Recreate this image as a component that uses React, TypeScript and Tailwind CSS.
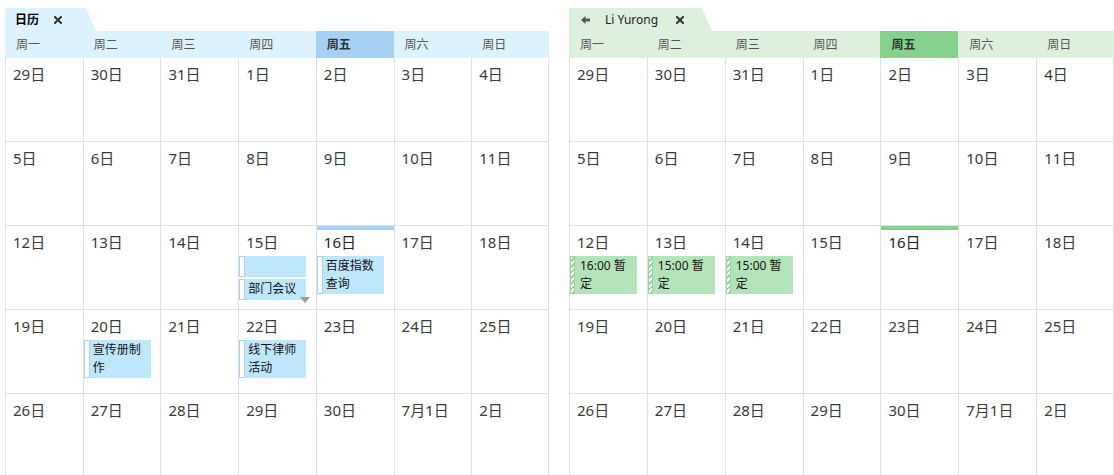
import React from 'react'

type Ev = { text: string; h?: number }
type Theme = 'blue' | 'green'

const WEEK = ['周一', '周二', '周三', '周四', '周五', '周六', '周日']
const DAYS = [
  ['29日', '30日', '31日', '1日', '2日', '3日', '4日'],
  ['5日', '6日', '7日', '8日', '9日', '10日', '11日'],
  ['12日', '13日', '14日', '15日', '16日', '17日', '18日'],
  ['19日', '20日', '21日', '22日', '23日', '24日', '25日'],
  ['26日', '27日', '28日', '29日', '30日', '7月1日', '2日'],
]

const CloseIcon = () => (
  <svg width="8" height="8" viewBox="0 0 8 8" className="shrink-0">
    <path d="M1 1L7 7M7 1L1 7" stroke="#333" strokeWidth="2" strokeLinecap="square" />
  </svg>
)

const BackIcon = () => (
  <svg width="9" height="8" viewBox="0 0 9 8" className="shrink-0">
    <path d="M0 4L4.5 0V2.5H9V5.5H4.5V8Z" fill="#555" />
  </svg>
)

function BlueEvent({ text, h }: Ev) {
  return (
    <div className="flex w-[67px] bg-[#bee7fc]" style={h ? { height: h } : undefined}>
      <div className="w-[6px] shrink-0 bg-white border border-[#a6d4f2]" />
      <div className="pl-[3px] pr-[4px] text-[12px] leading-[18px] py-[1px] text-[#111]">{text}</div>
    </div>
  )
}

function GreenEvent({ text }: Ev) {
  return (
    <div className="flex w-[67px] bg-[#b3e4b9]">
      <div className="w-[5px] shrink-0 border border-[#9bd5a2] bg-[repeating-linear-gradient(135deg,#ffffff_0px,#ffffff_2px,#9bd5a2_2px,#9bd5a2_4px)]" />
      <div className="pl-[5px] pr-[5px] text-[12px] leading-[18px] py-[1px] text-[#111]">{text}</div>
    </div>
  )
}

function Panel({
  theme,
  tab,
  tabW,
  w,
  events,
}: {
  theme: Theme
  tab: React.ReactNode
  tabW: string
  w: string
  events: Record<string, React.ReactNode>
}) {
  const blue = theme === 'blue'
  return (
    <div className={`${w} shrink-0 flex flex-col pt-[8px]`}>
      <div
        className={`${tabW} h-[23px] shrink-0 flex items-center ${
          blue ? 'bg-[#dcf2fd]' : 'bg-[#dcf0dd]'
        } [clip-path:polygon(0_0,calc(100%-10px)_0,100%_100%,0_100%)]`}
      >
        {tab}
      </div>
      <div className={`grid grid-cols-7 h-[27px] shrink-0 ${blue ? 'bg-[#dcf2fd]' : 'bg-[#dcf0dd]'}`}>
        {WEEK.map((d, i) => (
          <div
            key={d}
            className={`flex items-center pl-[11px] text-[12px] ${
              i === 4
                ? `font-bold text-[#333] ${blue ? 'bg-[#a7d1f3]' : 'bg-[#87d18e]'}`
                : 'text-[#555]'
            }`}
          >
            {d}
          </div>
        ))}
      </div>
      <div className="grid grid-cols-7 shrink-0">
        {DAYS.map((row, r) =>
          row.map((d, c) => {
            const key = `${r}-${c}`
            const today = r === 2 && c === 4
            return (
              <div
                key={key}
                className={`relative h-[84px] border-l border-b border-[#e0e0e0] ${c === 6 ? 'border-r' : ''}`}
              >
                {today && (
                  <div
                    className={`absolute top-0 left-0 right-0 h-[4px] ${blue ? 'bg-[#a7d1f3]' : 'bg-[#87d18e]'}`}
                  />
                )}
                <div
                  className={`pl-[7px] pt-[6px] text-[15px] leading-[20px] ${today ? 'text-[#222]' : 'text-[#3a3a3a]'}`}
                >
                  {d}
                </div>
                {events[key] && <div className="mt-[4px] flex flex-col gap-[2px]">{events[key]}</div>}
              </div>
            )
          })
        )}
      </div>
    </div>
  )
}

export default function App() {
  const blueEvents = {
    '2-3': (
      <>
        <BlueEvent text="" h={21} />
        <BlueEvent text="部门会议" h={21} />
        <div className="absolute left-[61px] top-[71px] w-0 h-0 border-l-[5px] border-r-[5px] border-t-[6px] border-l-transparent border-r-transparent border-t-[#9a9a9a]" />
      </>
    ),
    '2-4': <BlueEvent text="百度指数查询" />,
    '3-1': <BlueEvent text="宣传册制作" />,
    '3-3': <BlueEvent text="线下律师活动" />,
  }
  const greenEvents = {
    '2-0': <GreenEvent text="16:00 暂定" />,
    '2-1': <GreenEvent text="15:00 暂定" />,
    '2-2': <GreenEvent text="15:00 暂定" />,
  }

  return (
    <div className="w-[1114px] h-[475px] overflow-hidden bg-white flex gap-[20px] pl-[5px] font-['Noto_Sans','Noto_Sans_CJK_SC',sans-serif]">
      <Panel
        theme="blue"
        w="w-[544px]"
        tabW="w-[91px]"
        events={blueEvents}
        tab={
          <div className="flex items-center pl-[10px] gap-[15px]">
            <span className="text-[12px] font-bold text-black">日历</span>
            <CloseIcon />
          </div>
        }
      />
      <Panel
        theme="green"
        w="w-[545px]"
        tabW="w-[143px]"
        events={greenEvents}
        tab={
          <div className="flex items-center pl-[12px]">
            <BackIcon />
            <span className="ml-[15px] text-[12px] text-[#222]">Li Yurong</span>
            <span className="ml-[18px] flex">
              <CloseIcon />
            </span>
          </div>
        }
      />
    </div>
  )
}
